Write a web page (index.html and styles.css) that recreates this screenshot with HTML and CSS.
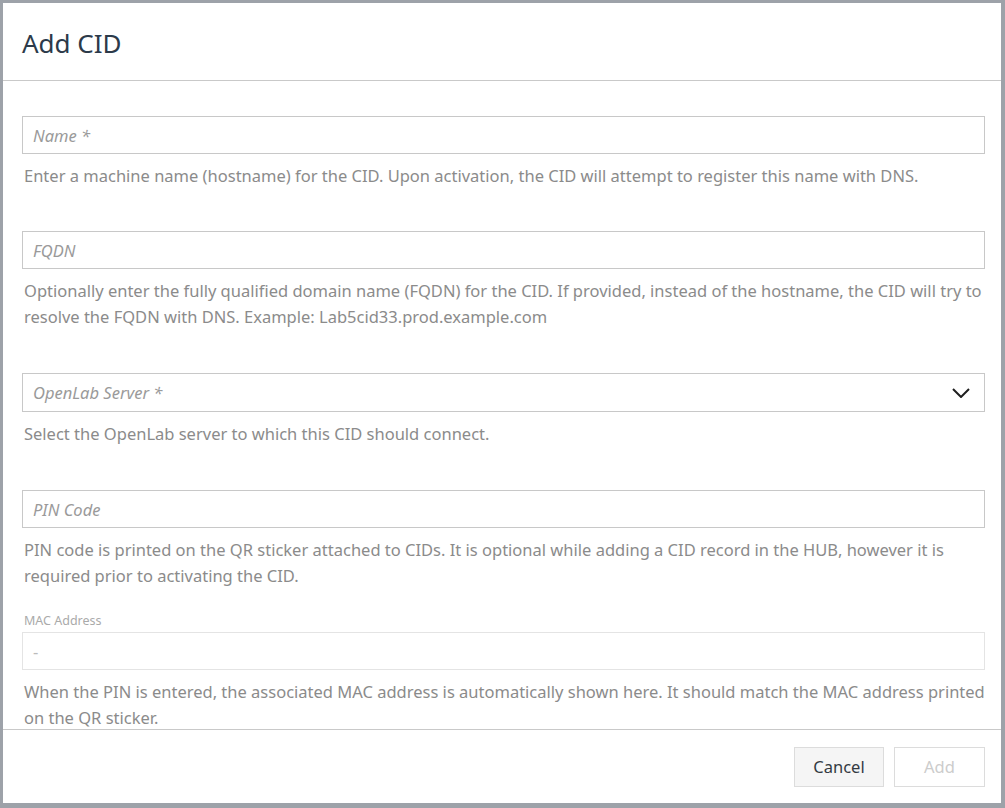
FILE: index.html
```html
<!DOCTYPE html>
<html lang="en">
<head>
<meta charset="utf-8">
<title>Add CID</title>
<link rel="stylesheet" href="styles.css">
</head>
<body>
<div class="dialog">
  <div class="dialog-header">
    <h1 class="dialog-title">Add CID</h1>
  </div>
  <div class="dialog-body">
    <div class="field field-name">
      <div class="input"><span class="placeholder">Name *</span></div>
      <p class="help">Enter a machine name (hostname) for the CID. Upon activation, the CID will attempt to register this name with DNS.</p>
    </div>
    <div class="field">
      <div class="input"><span class="placeholder">FQDN</span></div>
      <p class="help">Optionally enter the fully qualified domain name (FQDN) for the CID. If provided, instead of the hostname, the CID will try to resolve the FQDN with DNS. Example: Lab5cid33.prod.example.com</p>
    </div>
    <div class="field">
      <div class="input select"><span class="placeholder">OpenLab Server *</span>
        <svg class="chevron" width="18" height="10" viewBox="0 0 18 10"><polyline points="1,1 9,9 17,1" fill="none" stroke="#1f1f1f" stroke-width="2"/></svg>
      </div>
      <p class="help">Select the OpenLab server to which this CID should connect.</p>
    </div>
    <div class="field field-pin">
      <div class="input"><span class="placeholder">PIN Code</span></div>
      <p class="help">PIN code is printed on the QR sticker attached to CIDs. It is optional while adding a CID record in the HUB, however it is required prior to activating the CID.</p>
    </div>
    <div class="field">
      <label class="small-label">MAC Address</label>
      <div class="input disabled"><span class="value">-</span></div>
      <p class="help">When the PIN is entered, the associated MAC address is automatically shown here. It should match the MAC address printed on the QR sticker.</p>
    </div>
  </div>
  <div class="dialog-footer">
    <button class="btn btn-cancel">Cancel</button>
    <button class="btn btn-add">Add</button>
  </div>
</div>
</body>
</html>
```

FILE: styles.css
```css
html, body {
  margin: 0;
  padding: 0;
}
body {
  background: #9da2a9;
  font-family: "Noto Sans", "Open Sans", sans-serif;
  width: 1005px;
  height: 808px;
  overflow: hidden;
}
.dialog {
  margin: 3px 4px 5px 3px;
  width: 998px;
  height: 800px;
  background: #fff;
  display: flex;
  flex-direction: column;
}
.dialog-header {
  border-bottom: 1px solid #c9c9c9;
  display: flex;
  align-items: center;
  padding: 3px 19px 0;
  box-sizing: content-box;
  height: 74px;
}
.dialog-title {
  margin: 0;
  font-size: 26px;
  font-weight: 400;
  color: #2c3a4a;
}
.dialog-body {
  height: 648px;
  overflow: hidden;
  padding: 35px 16px 0 19px;
  box-sizing: border-box;
}
.field {
  margin-bottom: 43px;
}
.field-name {
  margin-bottom: 42px;
}
.field-pin {
  margin-bottom: 24px;
}
.input {
  height: 38px;
  box-sizing: border-box;
  border: 1px solid #c8c8c8;
  display: flex;
  align-items: center;
  padding: 0 10px;
  font-size: 16.5px;
}
.select {
  height: 39px;
  justify-content: space-between;
  padding-right: 14px;
}
.placeholder {
  font-style: italic;
  color: #9a9a9a;
}
.chevron {
  display: block;
}
.help {
  margin: 9px 0 0 2px;
  font-size: 16.5px;
  line-height: 26px;
  color: #8b8b8b;
}
.small-label {
  display: block;
  margin-left: 2px;
  font-size: 12.5px;
  line-height: 16px;
  color: #aaaaaa;
  margin-bottom: 3px;
}
.disabled {
  border-color: #e4e4e4;
}
.value {
  color: #bbbbbb;
}
.dialog-footer {
  border-top: 1px solid #c9c9c9;
  height: 73px;
  display: flex;
  justify-content: flex-end;
  align-items: center;
  gap: 10px;
  padding: 0 16px 0 0;
}
.btn {
  font-family: "Noto Sans", "Open Sans", sans-serif;
  font-size: 16.5px;
  height: 40px;
  border: 1px solid #dcdcdc;
  padding: 0;
  cursor: pointer;
}
.btn-cancel {
  width: 90px;
  background: #f5f5f5;
  color: #333a42;
}
.btn-add {
  width: 91px;
  background: #fff;
  color: #cccccc;
}
```
